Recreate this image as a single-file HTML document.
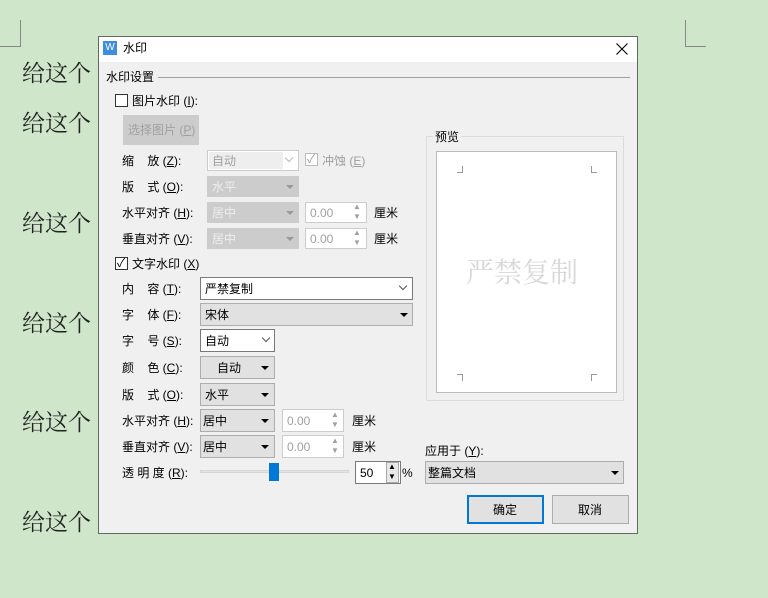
<!DOCTYPE html>
<html><head><meta charset="utf-8"><style>
*{margin:0;padding:0;box-sizing:border-box}
body{width:768px;height:598px;background:#cfe6cb;position:relative;overflow:hidden;font-family:"Liberation Sans","Noto Sans CJK SC",sans-serif;font-size:12px;color:#000}
.a{position:absolute}
.bg{position:absolute;left:22px;font-family:"Liberation Serif","Noto Serif CJK SC",serif;font-size:23px;color:#222}
.t{position:absolute;line-height:14px;white-space:nowrap}
.g{color:#a0a0a0}
.cb{position:absolute;width:13px;height:13px;border:1px solid #333;background:#fff}
.box{position:absolute;border:1px solid #adadad}
.gray{background:#ccc;border-color:#ccc}
.dd{background:#e1e1e1;border-color:#adadad}
.wh{background:#fff;border-color:#7a7a7a}
.tri{position:absolute;width:0;height:0;border-left:4px solid transparent;border-right:4px solid transparent;border-top:4px solid #000}
.chev{position:absolute;width:6px;height:6px;border-right:1px solid #555;border-bottom:1px solid #555;transform:rotate(45deg)}
u{text-decoration:underline}
</style></head><body>
<div class="a" style="left:0;top:46px;width:20px;height:1px;background:#888"></div>
<div class="a" style="left:20px;top:20px;width:1px;height:27px;background:#888"></div>
<div class="a" style="left:686px;top:46px;width:20px;height:1px;background:#888"></div>
<div class="a" style="left:685px;top:20px;width:1px;height:27px;background:#888"></div>
<div class="bg" style="top:55px">给这个</div>
<div class="bg" style="top:105px">给这个</div>
<div class="bg" style="top:205px">给这个</div>
<div class="bg" style="top:305px">给这个</div>
<div class="bg" style="top:404px">给这个</div>
<div class="bg" style="top:504px">给这个</div>

<div class="a" style="left:98px;top:36px;width:540px;height:498px;background:#f0f0f0;border:1px solid #5f6b5f">
<div class="a" style="left:0;top:0;width:538px;height:25px;background:#fff"></div>
</div>
<div class="a" style="left:103px;top:41px;width:14px;height:14px;background:#3c8fe0;color:#fff;font-size:10px;line-height:14px;text-align:center">W</div>
<div class="t" style="left:123px;top:41px">水印</div>
<svg class="a" style="left:616px;top:43px" width="12" height="12"><path d="M0.5 0.5L11.5 11.5M11.5 0.5L0.5 11.5" stroke="#000" stroke-width="1.1"/></svg>

<div class="t" style="left:106px;top:70px">水印设置</div>
<div class="a" style="left:158px;top:77px;width:472px;height:1px;background:#a0a0a0"></div>

<div class="cb" style="left:115px;top:94px"></div>
<div class="t" style="left:132px;top:94px">图片水印 (<u>I</u>):</div>
<div class="box gray" style="left:123px;top:115px;width:76px;height:30px"></div>
<div class="t g" style="left:128px;top:123px">选择图片 (<u>P</u>)</div>

<div class="t" style="left:122px;top:154px">缩&nbsp;&nbsp;&nbsp;&nbsp;放 (<u>Z</u>):</div>
<div class="box" style="left:207px;top:150px;width:92px;height:21px;background:#fff;border-color:#ccc"><div class="a" style="left:1px;top:1px;width:74px;height:17px;background:#eee"></div></div>
<div class="t g" style="left:212px;top:154px">自动</div>
<div class="chev" style="left:286px;top:155px;border-color:#bbb"></div>
<div class="cb" style="left:305px;top:153px;border-color:#bbb"></div>
<div class="t g" style="left:307px;top:152px">✓</div>
<div class="t g" style="left:322px;top:154px">冲蚀 (<u>E</u>)</div>

<div class="t" style="left:122px;top:180px">版&nbsp;&nbsp;&nbsp;&nbsp;式 (<u>O</u>):</div>
<div class="box gray" style="left:207px;top:176px;width:92px;height:21px"></div>
<div class="t g" style="left:212px;top:180px;color:#eee">水平</div>
<div class="tri" style="left:286px;top:185px;border-top-color:#999"></div>

<div class="t" style="left:122px;top:206px">水平对齐 (<u>H</u>):</div>
<div class="box gray" style="left:207px;top:202px;width:92px;height:21px"></div>
<div class="t" style="left:212px;top:206px;color:#eee">居中</div>
<div class="tri" style="left:286px;top:211px;border-top-color:#999"></div>
<div class="box" style="left:305px;top:202px;width:62px;height:21px;background:#fff;border-color:#ccc"></div>
<div class="t g" style="left:310px;top:206px">0.00</div>
<div class="t g" style="left:353px;top:202px;font-size:8px;line-height:10px">▲<br>▼</div>
<div class="t" style="left:374px;top:206px">厘米</div>

<div class="t" style="left:122px;top:232px">垂直对齐 (<u>V</u>):</div>
<div class="box gray" style="left:207px;top:228px;width:92px;height:21px"></div>
<div class="t" style="left:212px;top:232px;color:#eee">居中</div>
<div class="tri" style="left:286px;top:237px;border-top-color:#999"></div>
<div class="box" style="left:305px;top:228px;width:62px;height:21px;background:#fff;border-color:#ccc"></div>
<div class="t g" style="left:310px;top:232px">0.00</div>
<div class="t g" style="left:353px;top:228px;font-size:8px;line-height:10px">▲<br>▼</div>
<div class="t" style="left:374px;top:232px">厘米</div>

<div class="cb" style="left:115px;top:257px"></div>
<div class="t" style="left:117px;top:256px">✓</div>
<div class="t" style="left:132px;top:257px">文字水印 (<u>X</u>)</div>

<div class="t" style="left:122px;top:282px">内&nbsp;&nbsp;&nbsp;&nbsp;容 (<u>T</u>):</div>
<div class="box wh" style="left:200px;top:277px;width:213px;height:23px"></div>
<div class="t" style="left:205px;top:282px">严禁复制</div>
<div class="chev" style="left:400px;top:283px"></div>

<div class="t" style="left:122px;top:308px">字&nbsp;&nbsp;&nbsp;&nbsp;体 (<u>F</u>):</div>
<div class="box dd" style="left:200px;top:303px;width:213px;height:23px"></div>
<div class="t" style="left:205px;top:308px">宋体</div>
<div class="tri" style="left:400px;top:313px"></div>

<div class="t" style="left:122px;top:334px">字&nbsp;&nbsp;&nbsp;&nbsp;号 (<u>S</u>):</div>
<div class="box wh" style="left:200px;top:329px;width:75px;height:23px"></div>
<div class="t" style="left:205px;top:334px">自动</div>
<div class="chev" style="left:263px;top:335px"></div>

<div class="t" style="left:122px;top:361px">颜&nbsp;&nbsp;&nbsp;&nbsp;色 (<u>C</u>):</div>
<div class="box dd" style="left:200px;top:356px;width:75px;height:23px"></div>
<div class="t" style="left:217px;top:361px">自动</div>
<div class="tri" style="left:261px;top:366px"></div>

<div class="t" style="left:122px;top:388px">版&nbsp;&nbsp;&nbsp;&nbsp;式 (<u>O</u>):</div>
<div class="box dd" style="left:200px;top:383px;width:75px;height:23px"></div>
<div class="t" style="left:205px;top:388px">水平</div>
<div class="tri" style="left:261px;top:393px"></div>

<div class="t" style="left:122px;top:414px">水平对齐 (<u>H</u>):</div>
<div class="box dd" style="left:200px;top:409px;width:75px;height:23px"></div>
<div class="t" style="left:203px;top:414px">居中</div>
<div class="tri" style="left:261px;top:419px"></div>
<div class="box" style="left:282px;top:409px;width:62px;height:23px;background:#fff;border-color:#ccc"></div>
<div class="t g" style="left:287px;top:414px">0.00</div>
<div class="t g" style="left:331px;top:410px;font-size:8px;line-height:10px">▲<br>▼</div>
<div class="t" style="left:352px;top:414px">厘米</div>

<div class="t" style="left:122px;top:440px">垂直对齐 (<u>V</u>):</div>
<div class="box dd" style="left:200px;top:435px;width:75px;height:23px"></div>
<div class="t" style="left:203px;top:440px">居中</div>
<div class="tri" style="left:261px;top:445px"></div>
<div class="box" style="left:282px;top:435px;width:62px;height:23px;background:#fff;border-color:#ccc"></div>
<div class="t g" style="left:287px;top:440px">0.00</div>
<div class="t g" style="left:331px;top:436px;font-size:8px;line-height:10px">▲<br>▼</div>
<div class="t" style="left:352px;top:440px">厘米</div>

<div class="t" style="left:122px;top:466px">透 明 度 (<u>R</u>):</div>
<div class="a" style="left:200px;top:470px;width:149px;height:3px;background:#e3e3e3;border:1px solid #d6d6d6"></div>
<div class="a" style="left:269px;top:463px;width:10px;height:18px;background:#0078d7"></div>
<div class="box" style="left:355px;top:461px;width:46px;height:23px;background:#fff;border-color:#7a7a7a"></div>
<div class="t" style="left:360px;top:466px">50</div>
<div class="box" style="left:386px;top:462px;width:13px;height:21px;background:#e8e8e8;border-color:#aaa"></div>
<div class="t" style="left:388px;top:462px;font-size:8px;line-height:10px">▲<br>▼</div>
<div class="t" style="left:402px;top:466px">%</div>

<div class="box" style="left:426px;top:136px;width:198px;height:265px;border-color:#dcdcdc"></div>
<div class="t" style="left:433px;top:130px;background:#f0f0f0;padding:0 2px">预览</div>
<div class="box" style="left:436px;top:151px;width:181px;height:242px;background:#fff;border-color:#bbb"></div>
<div class="a" style="left:457px;top:172px;width:6px;height:1px;background:#999"></div><div class="a" style="left:462px;top:166px;width:1px;height:7px;background:#999"></div>
<div class="a" style="left:591px;top:172px;width:6px;height:1px;background:#999"></div><div class="a" style="left:591px;top:166px;width:1px;height:7px;background:#999"></div>
<div class="a" style="left:457px;top:374px;width:6px;height:1px;background:#999"></div><div class="a" style="left:462px;top:374px;width:1px;height:7px;background:#999"></div>
<div class="a" style="left:591px;top:374px;width:6px;height:1px;background:#999"></div><div class="a" style="left:591px;top:374px;width:1px;height:7px;background:#999"></div>
<div class="t" style="left:466px;top:258px;font-size:28px;line-height:32px;color:#d8d8d8;font-family:'Liberation Serif','Noto Serif CJK SC',serif">严禁复制</div>

<div class="t" style="left:425px;top:444px">应用于 (<u>Y</u>):</div>
<div class="box dd" style="left:425px;top:461px;width:199px;height:23px"></div>
<div class="t" style="left:428px;top:466px">整篇文档</div>
<div class="tri" style="left:611px;top:471px"></div>

<div class="a" style="left:467px;top:495px;width:77px;height:29px;background:#e1e1e1;border:2px solid #0078d7"></div>
<div class="t" style="left:493px;top:503px">确定</div>
<div class="a" style="left:552px;top:495px;width:77px;height:29px;background:#e1e1e1;border:1px solid #adadad"></div>
<div class="t" style="left:578px;top:503px">取消</div>
</body></html>
